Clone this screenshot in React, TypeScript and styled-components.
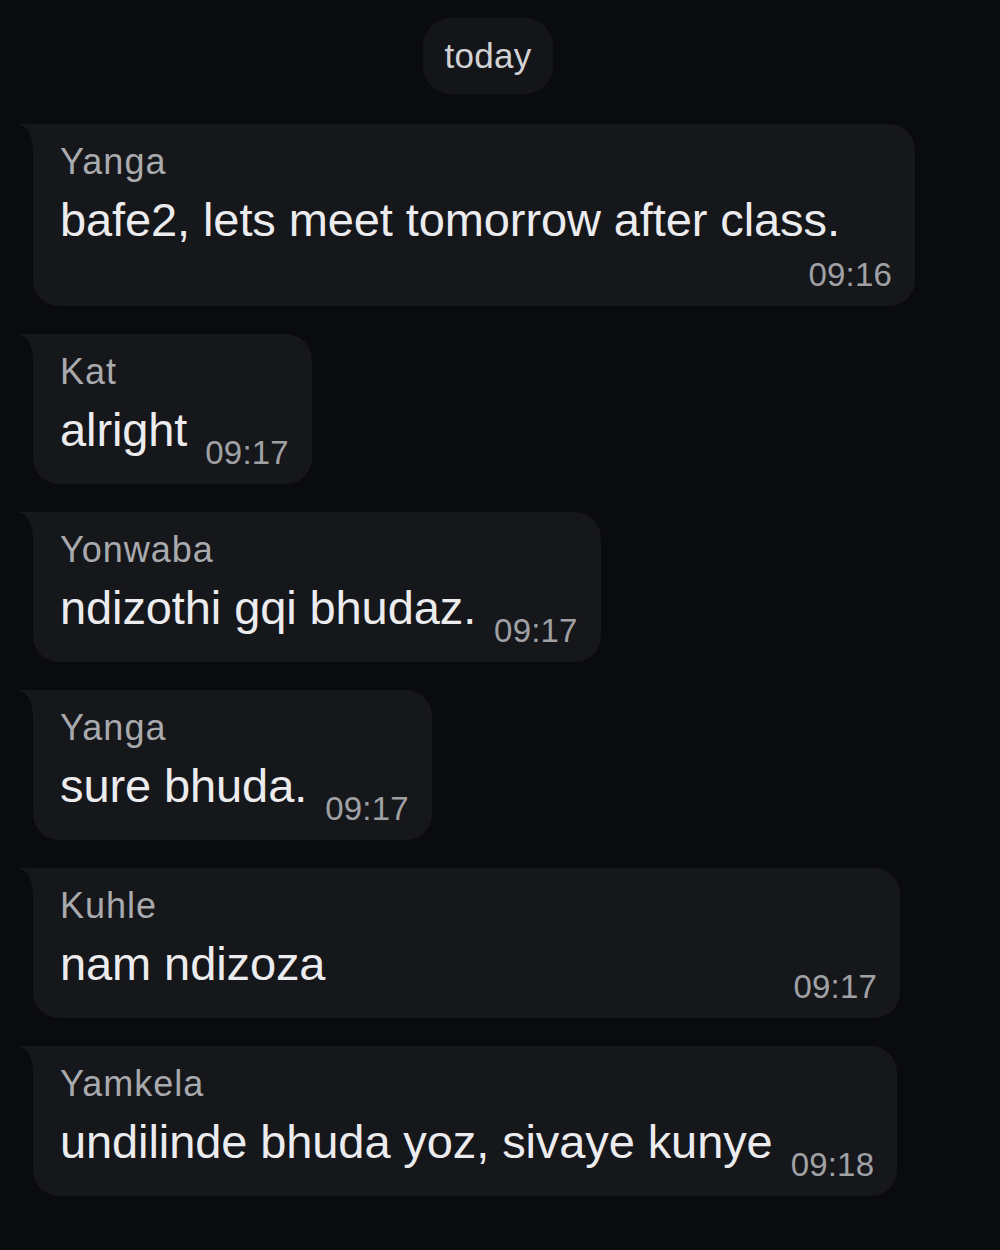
import React from "react";
import styled, { createGlobalStyle } from "styled-components";

const Global = createGlobalStyle`
  html, body {
    margin: 0;
    padding: 0;
    background: #0a0b0d;
  }
  body {
    font-family: "Liberation Sans", Arial, sans-serif;
    -webkit-font-smoothing: antialiased;
  }
`;

const Screen = styled.main`
  width: 1000px;
  min-height: 1250px;
  box-sizing: border-box;
  background: #0a0b0d;
  padding: 18px 0 0 33px;
  display: flex;
  flex-direction: column;
`;

const DateRow = styled.div`
  display: flex;
  justify-content: center;
  padding-right: 57px;
  margin-bottom: 30px;
`;

const DatePill = styled.div`
  height: 76px;
  padding: 0 21px;
  border-radius: 28px;
  background: #141519;
  color: #d2d2d5;
  font-size: 35px;
  line-height: 76px;
  letter-spacing: 0.3px;
`;

const List = styled.div`
  display: flex;
  flex-direction: column;
  align-items: flex-start;
  gap: 28px;
`;

const Bubble = styled.div<{ $width?: number }>`
  position: relative;
  box-sizing: border-box;
  width: ${(p) => (p.$width ? `${p.$width}px` : "fit-content")};
  max-width: 882px;
  padding: 17px 23px 25px 27px;
  background: #16171b;
  border-radius: 0 26px 26px 26px;
  display: flex;
  flex-direction: column;

  &::before {
    content: "";
    position: absolute;
    left: -15px;
    top: 0;
    width: 15px;
    height: 24px;
    background: radial-gradient(
      ellipse 15px 24px at 0 100%,
      transparent 96%,
      #16171b 100%
    );
  }
`;

const Sender = styled.div`
  color: #a9aaae;
  font-size: 36px;
  letter-spacing: 1px;
  line-height: 42px;
  margin-bottom: 8px;
`;

const Body = styled.div`
  display: flex;
  flex-wrap: wrap;
  align-items: flex-end;
  column-gap: 18px;
  row-gap: 6px;
`;

const Text = styled.span`
  color: #ececee;
  font-size: 47px;
  line-height: 58px;
  letter-spacing: -0.1px;
  white-space: nowrap;
`;

const Time = styled.span`
  margin-left: auto;
  margin-bottom: -14px;
  color: #a0a1a5;
  font-size: 33px;
  letter-spacing: 0.2px;
  line-height: 40px;
  white-space: nowrap;
`;

type Msg = { name: string; text: string; time: string; width?: number };

const messages: Msg[] = [
  { name: "Yanga", text: "bafe2, lets meet tomorrow after class.", time: "09:16" },
  { name: "Kat", text: "alright", time: "09:17" },
  { name: "Yonwaba", text: "ndizothi gqi bhudaz.", time: "09:17" },
  { name: "Yanga", text: "sure bhuda.", time: "09:17" },
  { name: "Kuhle", text: "nam ndizoza", time: "09:17", width: 867 },
  { name: "Yamkela", text: "undilinde bhuda yoz, sivaye kunye", time: "09:18" },
];

export default function App() {
  return (
    <>
      <Global />
      <Screen>
        <DateRow>
          <DatePill>today</DatePill>
        </DateRow>
        <List>
          {messages.map((m, i) => (
            <Bubble key={i} $width={m.width}>
              <Sender>{m.name}</Sender>
              <Body>
                <Text>{m.text}</Text>
                <Time>{m.time}</Time>
              </Body>
            </Bubble>
          ))}
        </List>
      </Screen>
    </>
  );
}
